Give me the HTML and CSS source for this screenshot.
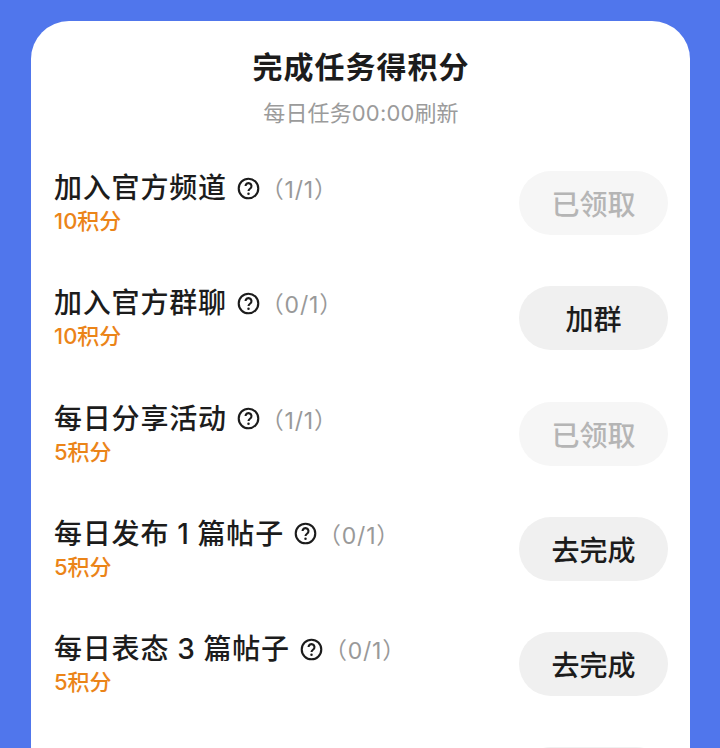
FILE: index.html
```html
<!DOCTYPE html>
<html lang="zh-CN">
<head>
<meta charset="utf-8">
<title>完成任务得积分</title>
<link rel="stylesheet" href="styles.css">
</head>
<body>
<main class="card">
  <h1 class="title">完成任务得积分</h1>
  <p class="subtitle">每日任务00:00刷新</p>
  <ul class="tasks">
    <li class="task">
      <div class="info">
        <div class="name-row"><span class="name">加入官方频道</span>
          <svg class="help" viewBox="0 0 24 24"><circle cx="12" cy="12" r="10.2"/><path d="M8.9 9.4a3.1 3.1 0 1 1 4.9 2.6c-1.1.8-1.8 1.3-1.8 2.7"/><circle class="dot" cx="12" cy="17.6" r="1.3"/></svg>
          <span class="count">（1/1）</span></div>
        <div class="points">10积分</div>
      </div>
      <button class="btn done">已领取</button>
    </li>
    <li class="task">
      <div class="info">
        <div class="name-row"><span class="name">加入官方群聊</span>
          <svg class="help" viewBox="0 0 24 24"><circle cx="12" cy="12" r="10.2"/><path d="M8.9 9.4a3.1 3.1 0 1 1 4.9 2.6c-1.1.8-1.8 1.3-1.8 2.7"/><circle class="dot" cx="12" cy="17.6" r="1.3"/></svg>
          <span class="count">（0/1）</span></div>
        <div class="points">10积分</div>
      </div>
      <button class="btn">加群</button>
    </li>
    <li class="task">
      <div class="info">
        <div class="name-row"><span class="name">每日分享活动</span>
          <svg class="help" viewBox="0 0 24 24"><circle cx="12" cy="12" r="10.2"/><path d="M8.9 9.4a3.1 3.1 0 1 1 4.9 2.6c-1.1.8-1.8 1.3-1.8 2.7"/><circle class="dot" cx="12" cy="17.6" r="1.3"/></svg>
          <span class="count">（1/1）</span></div>
        <div class="points">5积分</div>
      </div>
      <button class="btn done">已领取</button>
    </li>
    <li class="task">
      <div class="info">
        <div class="name-row"><span class="name">每日发布 1 篇帖子</span>
          <svg class="help" viewBox="0 0 24 24"><circle cx="12" cy="12" r="10.2"/><path d="M8.9 9.4a3.1 3.1 0 1 1 4.9 2.6c-1.1.8-1.8 1.3-1.8 2.7"/><circle class="dot" cx="12" cy="17.6" r="1.3"/></svg>
          <span class="count">（0/1）</span></div>
        <div class="points">5积分</div>
      </div>
      <button class="btn">去完成</button>
    </li>
    <li class="task">
      <div class="info">
        <div class="name-row"><span class="name">每日表态 3 篇帖子</span>
          <svg class="help" viewBox="0 0 24 24"><circle cx="12" cy="12" r="10.2"/><path d="M8.9 9.4a3.1 3.1 0 1 1 4.9 2.6c-1.1.8-1.8 1.3-1.8 2.7"/><circle class="dot" cx="12" cy="17.6" r="1.3"/></svg>
          <span class="count">（0/1）</span></div>
        <div class="points">5积分</div>
      </div>
      <button class="btn">去完成</button>
    </li>
    <li class="task">
      <div class="info"></div>
      <button class="btn"></button>
    </li>
  </ul>
</main>
</body>
</html>
```
FILE: styles.css
```css
* { box-sizing: border-box; }
html, body { margin: 0; height: 748px; overflow: hidden; }
body {
  background: #5076ec;
  padding: 21px 30px 0 31px;
  font-family: Inter, "Noto Sans CJK SC", sans-serif;
  color: #1c1c1c;
}
.card {
  background: #fff;
  height: 727px;
  overflow: hidden;
  border-radius: 38px 38px 0 0;
  padding: 27px 22px 0 23px;
}
.title {
  margin: 0;
  font-size: 30px;
  line-height: 38px;
  font-weight: 700;
  letter-spacing: 1px;
  text-align: center;
}
.subtitle {
  margin: 12px 0 0;
  font-size: 22px;
  line-height: 30px;
  letter-spacing: 0.15px;
  color: #9b9b9b;
  text-align: center;
}
.tasks {
  list-style: none;
  margin: 43px 0 0;
  padding: 0;
  display: flex;
  flex-direction: column;
  gap: 51.3px;
}
.task {
  display: flex;
  justify-content: space-between;
  align-items: center;
  height: 64px;
}
.name-row {
  display: flex;
  align-items: center;
  height: 34px;
}
.name { font-size: 28px; font-weight: 500; letter-spacing: 0.8px; line-height: 34px; word-spacing: -0.3px; }
.help {
  width: 23px;
  height: 23px;
  margin-left: 10px;
  fill: none;
  stroke: #1c1c1c;
  stroke-width: 2.2;
}
.help .dot { fill: #1c1c1c; stroke: none; }
.count { font-size: 23px; letter-spacing: 0.8px; margin-left: 1px; color: #999; }
.points {
  margin-top: 2px;
  font-size: 22px;
  line-height: 28px;
  font-weight: 500;
  color: #eb8418;
}
.btn {
  width: 149px;
  height: 64px;
  border: 0;
  border-radius: 32px;
  background: #f0f0f0;
  color: #1c1c1c;
  font-family: inherit;
  font-size: 28px;
  font-weight: 500;
  padding: 0;
}
.btn.done { background: #f6f6f6; color: #b5b5b5; }
```
